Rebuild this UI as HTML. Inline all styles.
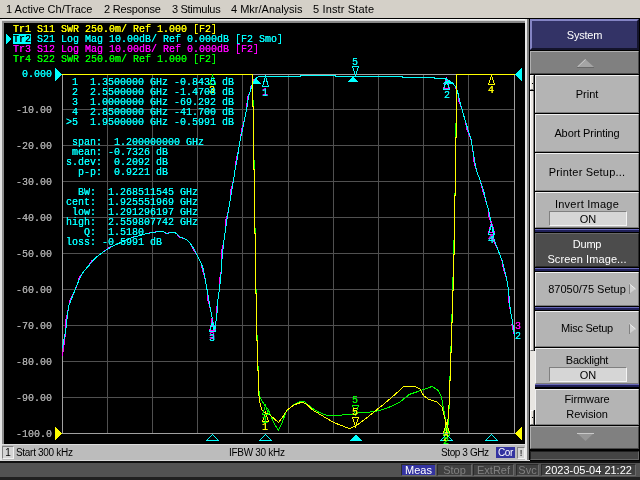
<!DOCTYPE html>
<html><head><meta charset="utf-8"><title>E5071C</title>
<style>

html,body{margin:0;padding:0;background:#000;}
body{width:640px;height:480px;overflow:hidden;position:relative;font-family:"Liberation Sans",sans-serif;font-size:11px;color:#000;}
.abs{position:absolute;}
div,span{will-change:transform;}
#menubar{left:0;top:0;width:640px;height:18px;background:#d4d0c8;}
#menubar span{position:absolute;top:3px;white-space:nowrap;line-height:13px;font-size:11px;}
#screen{left:3px;top:20px;width:522px;height:424px;background:#000;}
.mono{will-change:transform;text-shadow:0 0 0 currentColor;font-family:"Liberation Mono",monospace;font-size:10px;line-height:10px;white-space:pre;position:absolute;letter-spacing:0;}
.sk{position:absolute;left:535px;width:104px;background:#b4b4b4;box-sizing:border-box;border-top:1px solid #f0f0f0;border-left:1px solid #f0f0f0;border-bottom:1px solid #7c7c7c;border-right:1px solid #7c7c7c;text-align:center;font-size:11px;}
.sk div.t{position:absolute;left:0;width:102px;text-align:center;line-height:13px;white-space:nowrap;letter-spacing:-0.25px;}
.on{position:absolute;left:13px;width:78px;height:15px;box-sizing:border-box;background:#d6d6d6;border-top:1px solid #808080;border-left:1px solid #808080;border-bottom:1px solid #f4f4f4;border-right:1px solid #f4f4f4;line-height:15px;text-align:center;}
.sep{position:absolute;left:535px;width:104px;height:3px;}
.st{position:absolute;top:464px;height:12px;box-sizing:border-box;font-size:11px;line-height:10px;text-align:center;white-space:nowrap;border:1px solid #6a6a6a;border-top-color:#2a2a2a;border-left-color:#2a2a2a;}

</style></head><body>
<div id="menubar" class="abs">
<span style="left:6px">1 Active Ch/Trace</span>
<span style="left:104px"><i style="font-style:normal;letter-spacing:-0.2px">2 Response</i></span>
<span style="left:172px"><i style="font-style:normal;letter-spacing:-0.3px">3 Stimulus</i></span>
<span style="left:231px">4 Mkr/Analysis</span>
<span style="left:313px"><i style="font-style:normal;letter-spacing:0.15px">5 Instr State</i></span>
</div>
<div class="abs" style="left:0;top:18px;width:640px;height:1px;background:#000"></div>
<div class="abs" style="left:0;top:19px;width:530px;height:1px;background:#f8f8f8"></div>
<div class="abs" style="left:0;top:20px;width:530px;height:1px;background:#d8d8d8"></div>
<div class="abs" style="left:2px;top:21px;width:526px;height:2px;background:#888"></div>
<div class="abs" style="left:0;top:19px;width:2px;height:442px;background:#e4e4e4"></div>
<div class="abs" style="left:2px;top:21px;width:2px;height:423px;background:#8c8c8c"></div>
<div class="abs" style="left:525px;top:19px;width:2px;height:442px;background:#e8e8e8"></div>
<div class="abs" style="left:527px;top:19px;width:2px;height:442px;background:#808080"></div>
<div class="abs" style="left:529px;top:19px;width:1px;height:442px;background:#000"></div>
<div class="abs" style="left:4px;top:23px;width:521px;height:421px;background:#000"></div>
<div class="abs" style="left:13px;top:34px;width:18px;height:10px;background:#00ffff"></div>
<div class="mono" style="left:13px;top:25px;color:#ffff00;">Tr1 S11 SWR 250.0m/ Ref 1.000 [F2]</div>
<div class="mono" style="left:13px;top:35px;color:#00ffff;"><span style="color:#000">Tr2</span> S21 Log Mag 10.00dB/ Ref 0.000dB [F2 Smo]</div>
<div class="mono" style="left:13px;top:45px;color:#ff00ff;">Tr3 S12 Log Mag 10.00dB/ Ref 0.000dB [F2]</div>
<div class="mono" style="left:13px;top:55px;color:#00ff00;">Tr4 S22 SWR 250.0m/ Ref 1.000 [F2]</div>
<svg class="abs" style="left:0;top:0" width="640" height="480" viewBox="0 0 640 480" shape-rendering="crispEdges">
<polygon points="6,34 11,39 6,44" fill="#00ffff"/>
<line x1="107.5" y1="74" x2="107.5" y2="434" stroke="#505050" stroke-width="1"/>
<line x1="62" y1="109.5" x2="515" y2="109.5" stroke="#505050" stroke-width="1"/>
<line x1="152.5" y1="74" x2="152.5" y2="434" stroke="#505050" stroke-width="1"/>
<line x1="62" y1="145.5" x2="515" y2="145.5" stroke="#505050" stroke-width="1"/>
<line x1="197.5" y1="74" x2="197.5" y2="434" stroke="#505050" stroke-width="1"/>
<line x1="62" y1="181.5" x2="515" y2="181.5" stroke="#505050" stroke-width="1"/>
<line x1="242.5" y1="74" x2="242.5" y2="434" stroke="#505050" stroke-width="1"/>
<line x1="62" y1="217.5" x2="515" y2="217.5" stroke="#505050" stroke-width="1"/>
<line x1="288.5" y1="74" x2="288.5" y2="434" stroke="#505050" stroke-width="1"/>
<line x1="62" y1="253.5" x2="515" y2="253.5" stroke="#505050" stroke-width="1"/>
<line x1="333.5" y1="74" x2="333.5" y2="434" stroke="#505050" stroke-width="1"/>
<line x1="62" y1="289.5" x2="515" y2="289.5" stroke="#505050" stroke-width="1"/>
<line x1="378.5" y1="74" x2="378.5" y2="434" stroke="#505050" stroke-width="1"/>
<line x1="62" y1="325.5" x2="515" y2="325.5" stroke="#505050" stroke-width="1"/>
<line x1="423.5" y1="74" x2="423.5" y2="434" stroke="#505050" stroke-width="1"/>
<line x1="62" y1="361.5" x2="515" y2="361.5" stroke="#505050" stroke-width="1"/>
<line x1="468.5" y1="74" x2="468.5" y2="434" stroke="#505050" stroke-width="1"/>
<line x1="62" y1="397.5" x2="515" y2="397.5" stroke="#505050" stroke-width="1"/>
<rect x="62.5" y="74.5" width="452" height="359" fill="none" stroke="#a0a0a0" stroke-width="1"/>
<polyline points="62.5,356.0 63.9,346.0 65.8,330.0 65.9,320.0 68.1,310.0 69.1,305.0 70.0,300.0 74.1,292.2 77.2,284.4 79.3,277.3 83.4,271.9 88.1,266.4 91.8,260.9 97.5,256.2 103.8,251.6 109.0,247.7 117.8,243.8 125.6,240.3 132.4,237.2 140.0,235.6 145.0,234.0 151.5,232.5 158.8,231.6 163.1,231.5 165.9,233.5 171.2,232.5 176.2,233.1 179.0,236.9 186.2,239.4 190.0,243.1 192.8,248.8 197.5,255.6 201.2,263.1 202.5,270.0 205.4,280.0 207.1,290.0 207.8,300.0 210.6,310.0 212.1,317.5 211.5,322.0 213.2,327.2 214.2,330.5 214.1,330.0 215.7,325.0 216.2,319.0 216.4,310.0 217.8,300.0 219.4,290.0 219.4,280.0 221.4,270.0 221.9,260.0 221.9,250.0 224.0,240.0 225.4,230.0 225.9,220.0 228.5,210.0 230.2,200.0 230.9,190.0 233.5,180.0 235.0,170.0 236.1,160.0 238.5,150.0 240.2,140.0 241.5,130.0 244.3,120.0 246.5,110.0 247.5,97.0 249.5,93.5 250.5,90.0 250.5,87.0 252.5,84.0 253.5,82.0 254.0,79.5 256.5,78.0 258.0,77.0 258.5,76.5 300.0,76.5 301.0,75.5 334.0,75.5 336.0,76.5 402.0,76.5 402.0,77.5 434.0,77.5 435.0,78.5 444.0,78.5 446.0,79.5 449.0,80.5 450.0,82.0 453.0,83.5 455.0,86.0 455.5,88.5 457.5,91.5 458.5,95.5 458.4,100.0 461.9,109.0 465.0,120.0 467.1,130.0 471.2,140.0 472.9,150.0 473.4,160.0 476.3,170.0 480.0,180.0 482.5,190.0 485.6,200.0 488.5,210.0 489.0,217.0 491.5,224.0 493.0,232.0 493.2,240.0 498.1,250.0 501.9,260.0 503.6,270.0 506.9,280.0 508.5,290.0 508.4,300.0 510.3,310.0 512.2,320.0 512.0,325.0 514.5,336.0" fill="none" stroke="#ff00ff" stroke-width="1"/>
<polyline points="62.5,348.0 63.8,340.0 65.8,330.0 66.9,320.0 68.1,310.0 69.1,305.0 71.0,300.0 74.1,292.2 77.2,284.4 80.3,277.3 83.4,271.9 88.1,266.4 92.8,260.9 97.5,256.2 103.8,251.6 110.0,247.7 117.8,243.8 125.6,240.3 133.4,237.2 140.0,235.6 145.0,234.0 152.5,232.5 158.8,231.6 163.1,231.5 166.9,233.5 171.2,232.5 176.2,233.1 180.0,236.9 186.2,239.4 190.0,243.1 193.8,248.8 197.5,255.6 201.2,263.1 203.5,270.0 205.4,280.0 207.1,290.0 208.8,300.0 210.6,310.0 212.1,317.5 212.5,322.0 213.2,327.2 214.2,330.5 215.1,330.0 215.7,325.0 216.2,319.0 217.4,310.0 217.8,300.0 219.4,290.0 220.4,280.0 221.4,270.0 221.9,260.0 222.9,250.0 224.0,240.0 225.4,230.0 226.9,220.0 228.5,210.0 230.2,200.0 231.9,190.0 233.5,180.0 235.0,170.0 237.1,160.0 238.5,150.0 240.2,140.0 242.5,130.0 244.3,120.0 246.5,110.0 248.5,97.0 249.5,93.5 250.5,90.0 251.5,87.0 252.5,84.0 253.5,82.0 255.0,79.5 256.5,78.0 258.0,77.0 259.5,76.5 300.0,76.5 301.0,75.5 335.0,75.5 336.0,76.5 402.0,76.5 403.0,77.5 434.0,77.5 435.0,78.5 445.0,78.5 446.0,79.5 449.0,80.5 451.0,82.0 453.0,83.5 455.0,86.0 456.5,88.5 457.5,91.5 458.5,95.5 459.4,100.0 461.9,109.0 465.0,120.0 468.1,130.0 471.2,140.0 472.9,150.0 474.4,160.0 476.3,170.0 480.0,180.0 483.5,190.0 485.6,200.0 488.5,210.0 490.0,217.0 491.5,224.0 493.0,232.0 494.2,240.0 498.1,250.0 501.9,260.0 504.6,270.0 506.9,280.0 508.5,290.0 509.4,300.0 510.3,310.0 512.2,320.0 513.0,325.0 514.5,336.0" fill="none" stroke="#00ffff" stroke-width="1"/>
<polygon points="256.5,79 251.5,84 261.5,84" fill="#00ffff"/>
<polygon points="352.5,76.5 347.5,81.5 357.5,81.5" fill="#00ffff"/>
<polygon points="447,79 442,84 452,84" fill="#00ffff"/>
<polyline points="62.0,74.5 252.5,74.5 252.5,100.0 253.5,100.0 253.5,160.0 254.5,160.0 254.5,228.0 255.5,228.0 255.5,289.0 256.5,289.0 256.5,335.0 257.5,335.0 257.5,366.0 258.5,366.0 258.5,390.0 259.5,393.0 260.2,398.0 264.4,404.7 268.1,409.4 273.7,422.5 278.4,430.4 282.2,422.5 286.0,412.2 292.5,405.6 300.0,401.5 304.7,401.9 311.2,407.5 318.7,412.2 328.1,415.9 337.5,415.6 346.9,414.4 352.5,415.0 358.7,412.7 373.7,411.8 383.1,409.4 390.6,406.6 400.0,401.9 409.4,394.4 420.6,390.6 431.9,386.5 437.5,389.7 441.2,396.2 444.1,411.2 446.5,426.2 447.2,433.0 448.5,420.0 449.5,398.0 449.5,376.0 450.5,376.0 450.5,346.0 451.5,346.0 451.5,314.0 452.5,314.0 452.5,277.0 453.5,277.0 453.5,240.0 454.5,240.0 454.5,193.0 455.5,193.0 455.5,123.0 456.5,123.0 456.5,74.5 514.5,74.5" fill="none" stroke="#00ff00" stroke-width="1"/>
<polyline points="62.0,74.5 252.5,74.5 252.5,106.0 253.5,106.0 253.5,169.0 254.5,169.0 254.5,233.0 255.5,233.0 255.5,293.0 256.5,293.0 256.5,340.0 257.5,340.0 257.5,370.0 258.5,370.0 258.5,390.0 258.7,393.0 259.7,401.9 261.6,409.4 265.3,413.1 270.0,415.0 278.4,422.5 282.2,417.8 286.9,410.3 294.4,404.7 301.9,402.2 305.6,403.4 313.1,410.3 322.5,415.9 333.7,422.5 343.1,426.2 349.4,428.5 356.0,425.9 364.4,419.7 373.7,412.2 383.1,404.7 396.2,393.4 403.7,386.5 415.0,386.5 419.7,388.7 423.4,395.3 428.1,399.0 437.5,402.2 442.2,407.5 445.0,418.7 446.9,431.9 447.8,422.5 448.6,410.0 449.5,398.0 449.5,380.0 450.5,380.0 450.5,352.0 451.5,352.0 451.5,322.0 452.5,322.0 452.5,290.0 453.5,290.0 453.5,254.0 454.5,254.0 454.5,195.0 455.5,195.0 455.5,137.0 456.5,137.0 456.5,74.5 514.5,74.5" fill="none" stroke="#ffff00" stroke-width="1"/>
<polygon points="55,68 62,74.5 55,81" fill="#00ffff"/>
<polygon points="522,68 515,74.5 522,81" fill="#00ffff"/>
<polygon points="55,427 62,433.5 55,440" fill="#ffff00"/>
<polygon points="522,427 515,433.5 522,440" fill="#ffff00"/>
<polygon points="212.5,434.5 206.5,440.5 218.5,440.5" fill="none" stroke="#00ffff"/>
<polygon points="265.5,434.5 259.5,440.5 271.5,440.5" fill="none" stroke="#00ffff"/>
<polygon points="355.5,434.5 349.0,441 362.0,441" fill="#00ffff"/>
<polygon points="446.5,434.5 440.5,440.5 452.5,440.5" fill="none" stroke="#00ffff"/>
<polygon points="491.5,434.5 485.5,440.5 497.5,440.5" fill="none" stroke="#00ffff"/>
<polygon points="212.5,75.5 209.5,84.5 215.5,84.5" fill="none" stroke="#ffff00"/>
<polygon points="491.5,75.5 488.5,84.5 494.5,84.5" fill="none" stroke="#ffff00"/>
<polygon points="265.5,412.5 262.5,421.5 268.5,421.5" fill="none" stroke="#ffff00"/>
<polygon points="446.5,423.5 443.5,432.5 449.5,432.5" fill="none" stroke="#ffff00"/>
<polygon points="355.5,426.5 352.5,417.5 358.5,417.5" fill="none" stroke="#ffff00"/>
<polygon points="212.5,75.5 209.5,84.5 215.5,84.5" fill="none" stroke="#00ff00"/>
<polygon points="265.5,405.5 262.5,414.5 268.5,414.5" fill="none" stroke="#00ff00"/>
<polygon points="446.5,426.5 443.5,435.5 449.5,435.5" fill="none" stroke="#00ff00"/>
<polygon points="355.5,414.5 352.5,405.5 358.5,405.5" fill="none" stroke="#00ff00"/>
<polygon points="265.5,76.5 262.5,86.5 268.5,86.5" fill="none" stroke="#ff00ff"/>
<polygon points="446.5,78.5 443.5,88.5 449.5,88.5" fill="none" stroke="#ff00ff"/>
<polygon points="212.5,320.5 209.5,330.5 215.5,330.5" fill="none" stroke="#ff00ff"/>
<polygon points="491.5,222.5 488.5,232.5 494.5,232.5" fill="none" stroke="#ff00ff"/>
<polygon points="355.5,75.5 352.5,66.5 358.5,66.5" fill="none" stroke="#ff00ff"/>
<polygon points="265.5,76.5 262.5,86.5 268.5,86.5" fill="none" stroke="#00ffff"/>
<polygon points="446.5,79.5 443.5,89.5 449.5,89.5" fill="none" stroke="#00ffff"/>
<polygon points="212.5,321.5 209.5,331.5 215.5,331.5" fill="none" stroke="#00ffff"/>
<polygon points="491.5,224.5 488.5,234.5 494.5,234.5" fill="none" stroke="#00ffff"/>
<polygon points="355.5,75.5 352.5,66.5 358.5,66.5" fill="none" stroke="#00ffff"/>
</svg>
<div class="mono" style="left:209px;top:86px;color:#ffff00;">3</div>
<div class="mono" style="left:488px;top:86px;color:#ffff00;">4</div>
<div class="mono" style="left:262px;top:423px;color:#ffff00;">1</div>
<div class="mono" style="left:443px;top:434px;color:#ffff00;">2</div>
<div class="mono" style="left:352px;top:408px;color:#ffff00;">5</div>
<div class="mono" style="left:262px;top:416px;color:#00ff00;">1</div>
<div class="mono" style="left:443px;top:437px;color:#00ff00;">2</div>
<div class="mono" style="left:352px;top:396px;color:#00ff00;">5</div>
<div class="mono" style="left:262px;top:88px;color:#ff00ff;">1</div>
<div class="mono" style="left:209px;top:332px;color:#ff00ff;">3</div>
<div class="mono" style="left:488px;top:234px;color:#ff00ff;">4</div>
<div class="mono" style="left:262px;top:89px;color:#00ffff;">1</div>
<div class="mono" style="left:444px;top:91px;color:#00ffff;">2</div>
<div class="mono" style="left:209px;top:334px;color:#00ffff;">3</div>
<div class="mono" style="left:488px;top:236px;color:#00ffff;">4</div>
<div class="mono" style="left:352px;top:58px;color:#00ffff;">5</div>
<div class="mono" style="left:515px;top:322px;color:#ff00ff;">3</div>
<div class="mono" style="left:515px;top:332px;color:#00ffff;">2</div>
<div class="mono" style="left:22px;top:70px;color:#00ffff;">0.000</div>
<div class="mono" style="left:16px;top:106px;color:#a8a8a8;">-10.00</div>
<div class="mono" style="left:16px;top:142px;color:#a8a8a8;">-20.00</div>
<div class="mono" style="left:16px;top:178px;color:#a8a8a8;">-30.00</div>
<div class="mono" style="left:16px;top:214px;color:#a8a8a8;">-40.00</div>
<div class="mono" style="left:16px;top:250px;color:#a8a8a8;">-50.00</div>
<div class="mono" style="left:16px;top:286px;color:#a8a8a8;">-60.00</div>
<div class="mono" style="left:16px;top:322px;color:#a8a8a8;">-70.00</div>
<div class="mono" style="left:16px;top:358px;color:#a8a8a8;">-80.00</div>
<div class="mono" style="left:16px;top:394px;color:#a8a8a8;">-90.00</div>
<div class="mono" style="left:16px;top:430px;color:#a8a8a8;">-100.0</div>
<div class="mono" style="left:66px;top:78px;color:#00ffff;"> 1  1.3500000 GHz -0.8435 dB</div>
<div class="mono" style="left:66px;top:88px;color:#00ffff;"> 2  2.5500000 GHz -1.4708 dB</div>
<div class="mono" style="left:66px;top:98px;color:#00ffff;"> 3  1.0000000 GHz -69.292 dB</div>
<div class="mono" style="left:66px;top:108px;color:#00ffff;"> 4  2.8500000 GHz -41.700 dB</div>
<div class="mono" style="left:66px;top:118px;color:#00ffff;">&gt;5  1.9500000 GHz -0.5991 dB</div>
<div class="mono" style="left:66px;top:138px;color:#00ffff;"> span:  1.200000000 GHz</div>
<div class="mono" style="left:66px;top:148px;color:#00ffff;"> mean: -0.7326 dB</div>
<div class="mono" style="left:66px;top:158px;color:#00ffff;">s.dev:  0.2092 dB</div>
<div class="mono" style="left:66px;top:168px;color:#00ffff;">  p-p:  0.9221 dB</div>
<div class="mono" style="left:66px;top:188px;color:#00ffff;">  BW:  1.268511545 GHz</div>
<div class="mono" style="left:66px;top:198px;color:#00ffff;">cent:  1.925551969 GHz</div>
<div class="mono" style="left:66px;top:208px;color:#00ffff;"> low:  1.291296197 GHz</div>
<div class="mono" style="left:66px;top:218px;color:#00ffff;">high:  2.559807742 GHz</div>
<div class="mono" style="left:66px;top:228px;color:#00ffff;">   Q:  1.5180</div>
<div class="mono" style="left:66px;top:238px;color:#00ffff;">loss: -0.5991 dB</div>
<div class="abs" style="left:2px;top:444px;width:523px;height:16px;background:#bcbcbc;border-top:1px solid #dcdcdc;box-sizing:border-box"></div>
<div class="abs" style="left:0;top:460px;width:530px;height:1px;background:#d8d8d8"></div>
<div class="abs" style="left:0;top:461px;width:640px;height:2px;background:#101010"></div>
<div class="abs" style="left:2px;top:446px;width:12px;height:13px;box-sizing:border-box;background:#d4d4d4;border:1px solid #808080;border-bottom-color:#f0f0f0;border-right-color:#f0f0f0;font-size:10px;line-height:12px;text-align:center">1</div>
<div style="position:absolute;top:446px;font-size:10px;line-height:13px;white-space:nowrap;left:16px;letter-spacing:-0.3px">Start 300 kHz</div>
<div style="position:absolute;top:446px;font-size:10px;line-height:13px;white-space:nowrap;left:229px;letter-spacing:-0.3px">IFBW 30 kHz</div>
<div style="position:absolute;top:446px;font-size:10px;line-height:13px;white-space:nowrap;left:441px;letter-spacing:-0.4px">Stop 3 GHz</div>
<div class="abs" style="left:496px;top:447px;width:19px;height:11px;background:#3333a0;color:#fff;font-size:10px;letter-spacing:-0.3px;line-height:11px;text-align:center">Cor</div>
<div class="abs" style="left:517px;top:447px;width:8px;height:12px;box-sizing:border-box;background:#d4d4d4;border:1px solid #808080;border-bottom-color:#f0f0f0;border-right-color:#f0f0f0;font-size:9.5px;line-height:10px;text-align:center">!</div>
<div class="abs" style="left:0;top:463px;width:640px;height:14px;background:#525252"></div>
<div class="abs" style="left:0;top:477px;width:640px;height:3px;background:#202020"></div>
<div class="st" style="left:401px;width:35px;background:#3333a0;color:#fff">Meas</div>
<div class="st" style="left:437px;width:35px;background:#404040;color:#808080">Stop</div>
<div class="st" style="left:473px;width:41px;background:#404040;color:#808080">ExtRef</div>
<div class="st" style="left:516px;width:23px;background:#404040;color:#808080">Svc</div>
<div class="st" style="left:541px;width:95px;background:#404040;color:#fff">2023-05-04 21:22</div>
<div class="abs" style="left:530px;top:19px;width:110px;height:442px;background:#000"></div>
<div class="abs" style="left:530px;top:19px;width:109px;height:31px;box-sizing:border-box;background:#333366;border-top:2px solid #8484c4;border-left:2px solid #8484c4;border-bottom:2px solid #14142c;border-right:2px solid #14142c;color:#fff;text-align:center;line-height:29px;font-size:11px;letter-spacing:-0.2px">System</div>
<div class="abs" style="left:530px;top:51px;width:109px;height:23px;box-sizing:border-box;background:#808080;border-top:1px solid #b0b0b0;border-left:1px solid #b0b0b0;border-bottom:1px solid #484848;border-right:1px solid #484848"></div>
<svg class="abs" style="left:530px;top:51px" width="109" height="23"><polygon points="55,8 47,16 64,16" fill="#a4a4a4"/><polyline points="47.5,16 55.5,8.5" stroke="#c8c8c8" fill="none"/><line x1="47" y1="16.5" x2="64" y2="16.5" stroke="#686868"/></svg>
<div class="abs" style="left:530px;top:75px;width:5px;height:350px;background:#000"></div>
<div class="abs" style="left:530px;top:75px;width:4px;height:15px;box-sizing:border-box;background:#e8e4dc;border-left:1px solid #fff;border-top:1px solid #fff;border-right:1px solid #707070;border-bottom:1px solid #707070"></div>
<div class="abs" style="left:532px;top:83px;width:1px;height:1px;background:#000"></div>
<div class="abs" style="left:530px;top:91px;width:4px;height:260px;box-sizing:border-box;background:#ece8e4;border-left:1px solid #fff;border-right:1px solid #808080;border-bottom:1px solid #606060"></div>
<div class="abs" style="left:530px;top:351px;width:5px;height:59px;background:#e8e6e2"></div>
<div class="abs" style="left:530px;top:410px;width:4px;height:15px;box-sizing:border-box;background:#e8e4dc;border-left:1px solid #fff;border-top:1px solid #fff;border-right:1px solid #707070;border-bottom:1px solid #707070"></div>
<div class="abs" style="left:532px;top:417px;width:1px;height:1px;background:#000"></div>
<div class="sk" style="top:75px;height:38px;">
<div class="t" style="top:12px;letter-spacing:0px">Print</div>
</div>
<div class="sk" style="top:114px;height:38px;">
<div class="t" style="top:12px;letter-spacing:-0.1px">Abort Printing</div>
</div>
<div class="sk" style="top:153px;height:38px;">
<div class="t" style="top:12px;letter-spacing:0.2px">Printer Setup...</div>
</div>
<div class="sk" style="top:192px;height:36px;">
<div class="t" style="top:5px;letter-spacing:0.25px">Invert Image</div><div class="on" style="top:18px">ON</div>
</div>
<div class="abs" style="left:535px;top:229px;width:104px;height:1px;background:#6868b8"></div>
<div class="abs" style="left:535px;top:230px;width:104px;height:2px;background:#202058"></div>
<div class="sk" style="top:233px;height:34px;background:#4c4c4c;color:#fff;border-color:#686868 #282828 #282828 #686868;">
<div class="t" style="top:4px;letter-spacing:-0.25px">Dump</div><div class="t" style="top:19px;letter-spacing:0.1px">Screen Image...</div>
</div>
<div class="abs" style="left:535px;top:268px;width:104px;height:1px;background:#6868b8"></div>
<div class="abs" style="left:535px;top:269px;width:104px;height:2px;background:#202058"></div>
<div class="sk" style="top:272px;height:34px;">
<div class="t" style="top:10px;letter-spacing:0px">87050/75 Setup</div>
<svg style="position:absolute;left:92px;top:10px" width="9" height="13"><polygon points="1,1 7.5,6 1,11" fill="#d0d0d0"/><line x1="1.5" y1="1" x2="1.5" y2="11" stroke="#808080"/><polyline points="1.5,1 7.5,6" stroke="#f0f0f0" fill="none"/></svg>
</div>
<div class="abs" style="left:535px;top:307px;width:104px;height:1px;background:#6868b8"></div>
<div class="abs" style="left:535px;top:308px;width:104px;height:2px;background:#202058"></div>
<div class="sk" style="top:311px;height:36px;">
<div class="t" style="top:10px;letter-spacing:-0.25px">Misc Setup</div>
<svg style="position:absolute;left:92px;top:11px" width="9" height="13"><polygon points="1,1 7.5,6 1,11" fill="#d0d0d0"/><line x1="1.5" y1="1" x2="1.5" y2="11" stroke="#808080"/><polyline points="1.5,1 7.5,6" stroke="#f0f0f0" fill="none"/></svg>
</div>
<div class="sk" style="top:348px;height:36px;">
<div class="t" style="top:5px;letter-spacing:-0.25px">Backlight</div><div class="on" style="top:18px">ON</div>
</div>
<div class="abs" style="left:535px;top:384px;width:104px;height:1px;background:#6868b8"></div>
<div class="abs" style="left:535px;top:385px;width:104px;height:2px;background:#202058"></div>
<div class="sk" style="top:389px;height:36px;">
<div class="t" style="top:3px;letter-spacing:-0.1px">Firmware</div><div class="t" style="top:18px;letter-spacing:-0.1px">Revision</div>
</div>
<div class="abs" style="left:530px;top:426px;width:109px;height:23px;box-sizing:border-box;background:#808080;border-top:1px solid #b0b0b0;border-left:1px solid #b0b0b0;border-bottom:1px solid #484848;border-right:1px solid #484848"></div>
<svg class="abs" style="left:530px;top:426px" width="109" height="23"><polygon points="47,7 64,7 55.5,15" fill="#969696"/><line x1="47" y1="7.5" x2="64" y2="7.5" stroke="#c8c8c8"/></svg>
<div class="abs" style="left:530px;top:451px;width:109px;height:9px;box-sizing:border-box;background:#444;border:1px solid #686868;border-top-color:#202020;border-left-color:#202020"></div>
</body></html>
